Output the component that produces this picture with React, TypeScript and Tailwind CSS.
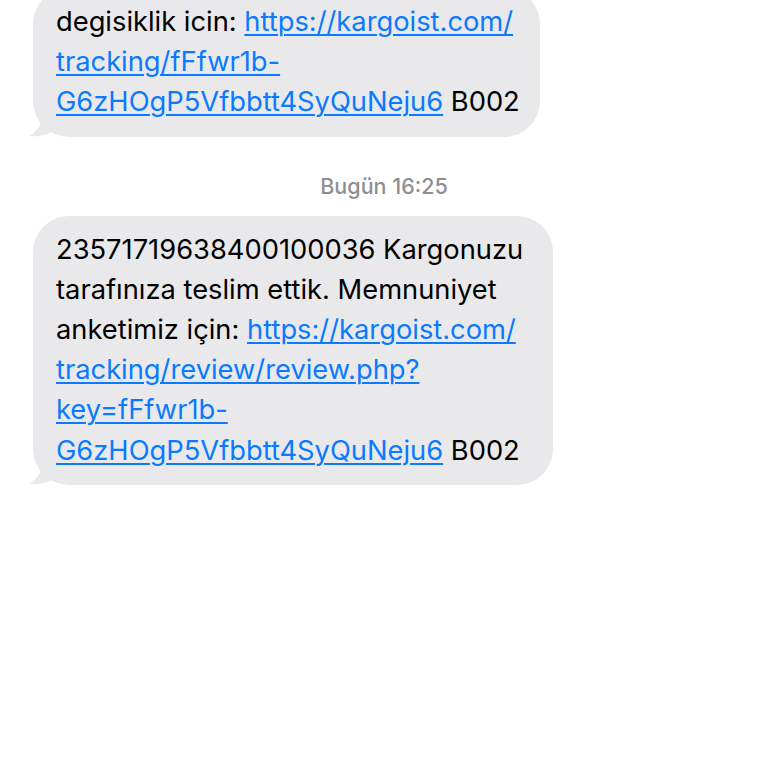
import React from 'react';

const Link: React.FC<{ children: React.ReactNode }> = ({ children }) => (
  <span className="text-[#0a7aff] underline decoration-[1.5px] underline-offset-[3px]">{children}</span>
);

const Tail: React.FC = () => (
  <svg className="absolute left-[-12px] bottom-0" width="34" height="28" viewBox="0 0 34 28">
    <path d="M22 0 C22 12 18 22 8 27 C18 28 28 26 34 20 L34 0 Z" fill="#e9e9eb" />
  </svg>
);

const Bubble: React.FC<{ lines: React.ReactNode[]; width: string; className?: string }> = ({ lines, width, className }) => (
  <div className={`relative ml-[33px] ${width} ${className ?? ''}`}>
    <Tail />
    <div className="relative rounded-[36px] bg-[#e9e9eb] pl-[23px] pr-4 pt-[14px] pb-[14px] text-[27.3px] leading-[40.2px] text-black">
      {lines.map((l, i) => (
        <div key={i} className="whitespace-nowrap">{l}</div>
      ))}
    </div>
  </div>
);

const App: React.FC = () => {
  return (
    <div className="w-[768px] h-[768px] overflow-hidden bg-white font-['Inter','Liberation_Sans',sans-serif]">
      <Bubble
        width="w-[507px]"
        className="-mt-[12px]"
        lines={[
          <>degisiklik icin: <Link>https://kargoist.com/</Link></>,
          <Link>tracking/fFfwr1b-</Link>,
          <><Link>G6zHOgP5Vfbbtt4SyQuNeju6</Link> B002</>,
        ]}
      />
      <div className="mt-[36px] mb-[17px] text-center text-[21.5px] leading-[26px] font-medium text-[#8e8e93]">
        Bugün 16:25
      </div>
      <Bubble
        width="w-[520px]"
        lines={[
          <>23571719638400100036 Kargonuzu</>,
          <>tarafınıza teslim ettik. Memnuniyet</>,
          <>anketimiz için: <Link>https://kargoist.com/</Link></>,
          <Link>tracking/review/review.php?</Link>,
          <Link>key=fFfwr1b-</Link>,
          <><Link>G6zHOgP5Vfbbtt4SyQuNeju6</Link> B002</>,
        ]}
      />
    </div>
  );
};

export default App;
